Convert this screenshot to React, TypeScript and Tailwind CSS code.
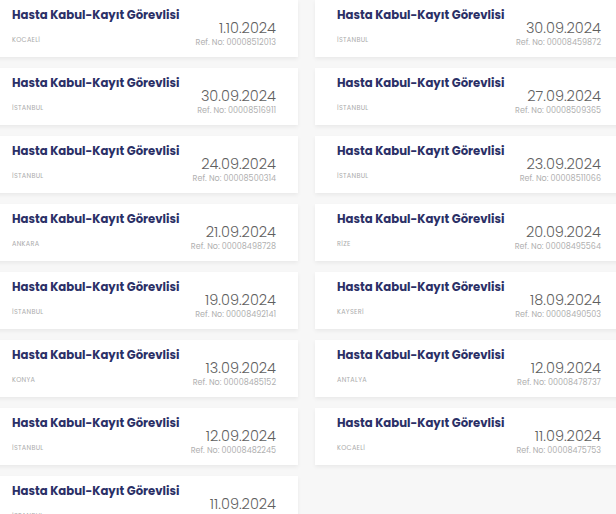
const jobs = [
  { date: "1.10.2024", city: "KOCAELİ", ref: "00008512013" },
  { date: "30.09.2024", city: "İSTANBUL", ref: "00008459872" },
  { date: "30.09.2024", city: "İSTANBUL", ref: "00008516911" },
  { date: "27.09.2024", city: "İSTANBUL", ref: "00008509365" },
  { date: "24.09.2024", city: "İSTANBUL", ref: "00008500314" },
  { date: "23.09.2024", city: "İSTANBUL", ref: "00008511066" },
  { date: "21.09.2024", city: "ANKARA", ref: "00008498728" },
  { date: "20.09.2024", city: "RİZE", ref: "00008495564" },
  { date: "19.09.2024", city: "İSTANBUL", ref: "00008492141" },
  { date: "18.09.2024", city: "KAYSERİ", ref: "00008490503" },
  { date: "13.09.2024", city: "KONYA", ref: "00008485152" },
  { date: "12.09.2024", city: "ANTALYA", ref: "00008478737" },
  { date: "12.09.2024", city: "İSTANBUL", ref: "00008482245" },
  { date: "11.09.2024", city: "KOCAELİ", ref: "00008475753" },
  { date: "11.09.2024", city: "İSTANBUL", ref: "00008470000" },
];

function JobCard({ date, city, ref }: { date: string; city: string; ref: string }) {
  return (
    <div className="h-[57px] bg-white shadow-[0_2px_4px_rgba(0,0,0,0.06)] px-[22px] pt-[7px]">
      <div className="text-[11.7px] font-bold leading-[16px] text-[#2b3067]">
        Hasta Kabul-Kayıt Görevlisi
      </div>
      <div className="flex justify-between items-end mt-[-3px]">
        <div className="text-[6.5px] leading-[10px] uppercase tracking-[0.3px] text-[#ababab] mb-[3px]">{city}</div>
        <div className="text-right">
          <div className="text-[14.5px] font-light leading-[17px] text-[#5f5f5f]">{date}</div>
          <div className="text-[8px] leading-[11px] text-[#b0b0b0]">Ref. No: {ref}</div>
        </div>
      </div>
    </div>
  );
}

export default function App() {
  return (
    <div className="h-[514px] overflow-hidden bg-[#f7f7f7] font-['Poppins','Inter',sans-serif]">
      <div className="ml-[-10px] grid grid-cols-[308px_308px] gap-x-[17px] gap-y-[11px]">
        {jobs.map((job, i) => (
          <JobCard key={i} {...job} />
        ))}
      </div>
    </div>
  );
}
